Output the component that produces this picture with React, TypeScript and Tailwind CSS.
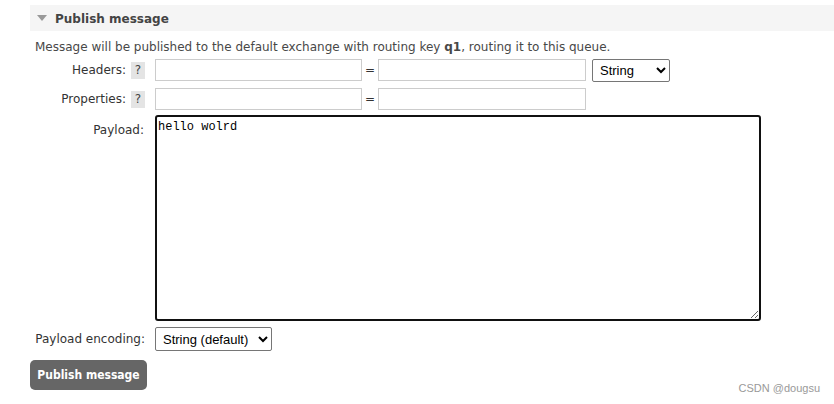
import React from 'react'

const Help = () => (
    <span className='inline-flex items-center justify-center w-[14px] h-[17px] bg-[#e4e4e4] text-[#444] text-[12px] ml-[5px]'>?</span>
)

const App = () => {
    return (
        <div className='w-[834px] h-[404px] bg-white relative text-[#333] text-[12px]' style={{ fontFamily: '"DejaVu Sans", Verdana, sans-serif' }}>
            <div className='pt-[5px] pl-[30px]'>
                <div className='h-[26px] bg-[#f5f5f5] flex items-center pl-[7px] gap-[8px]'>
                    <svg width='10' height='6' viewBox='0 0 10 6'><path d='M0 0 L10 0 L5 6 Z' fill='#999' /></svg>
                    <span className='font-bold text-[12px] text-[#444] mt-[1px]'>Publish message</span>
                </div>
            </div>

            <div className='pl-[35px] pt-[7px] text-[#484848]'>
                Message will be published to the default exchange with routing key <b>q1</b>, routing it to this queue.
            </div>

            <div className='grid grid-cols-[115px_1fr] gap-x-[10px] pl-[30px]'>
                <div className='flex items-center justify-end h-[22px] mt-[3px]'>Headers:<Help /></div>
                <div className='flex items-center h-[22px] mt-[3px]'>
                    <input className='w-[207px] h-[22px] border border-[#ccc] outline-none' />
                    <span className='w-[16px] text-center'>=</span>
                    <input className='w-[208px] h-[22px] border border-[#ccc] outline-none' />
                    <select className='ml-[6px] w-[78px] h-[23px] border border-[#767676] rounded-[2px] text-[13px] pl-[3px] text-black' style={{ fontFamily: '"Liberation Sans", Arial, sans-serif' }}>
                        <option>String</option>
                    </select>
                </div>

                <div className='flex items-center justify-end h-[22px] mt-[7px]'>Properties:<Help /></div>
                <div className='flex items-center h-[22px] mt-[7px]'>
                    <input className='w-[207px] h-[22px] border border-[#ccc] outline-none' />
                    <span className='w-[16px] text-center'>=</span>
                    <input className='w-[208px] h-[22px] border border-[#ccc] outline-none' />
                </div>

                <div className='text-right mt-[5px] pt-[6px] pr-[1px]'>Payload:</div>
                <div className='mt-[5px]'>
                    <textarea
                        defaultValue='hello wolrd'
                        className='block w-[606px] h-[206px] border-2 border-[#111] rounded-[3px] outline-none px-[1px] py-[1px] text-[12px] text-black resize'
                        style={{ fontFamily: '"Liberation Mono", "Courier New", monospace' }}
                    />
                </div>

                <div className='flex items-center justify-end h-[24px] mt-[6px]'>Payload encoding:</div>
                <div className='flex items-center h-[24px] mt-[6px]'>
                    <select className='w-[117px] h-[24px] border border-[#767676] rounded-[2px] text-[13px] pl-[3px] text-black' style={{ fontFamily: '"Liberation Sans", Arial, sans-serif' }}>
                        <option>String (default)</option>
                    </select>
                </div>
            </div>

            <div className='pl-[30px] mt-[9px]'>
                <button className='h-[30px] w-[117px] bg-[#666] text-white text-[12px] font-bold rounded-[5px]' style={{ fontFamily: '"DejaVu Sans Condensed", "DejaVu Sans", sans-serif' }}>Publish message</button>
            </div>

            <div className='absolute right-[14px] bottom-[8px] text-[11px] text-[#999]' style={{ fontFamily: '"Liberation Sans", Arial, sans-serif' }}>CSDN @dougsu</div>
        </div>
    )
}

export default App
